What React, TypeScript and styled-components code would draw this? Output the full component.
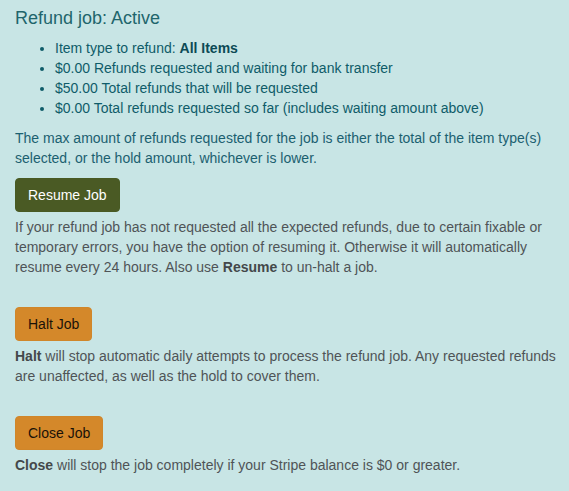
import React from "react";
import styled, { createGlobalStyle } from "styled-components";

const GlobalStyle = createGlobalStyle`
  html, body {
    margin: 0;
    padding: 0;
    background: #c8e5e5;
  }
  body {
    font-family: "Liberation Sans", Arial, sans-serif;
    font-size: 14px;
    line-height: 20px;
  }
`;

const Page = styled.div`
  padding: 8px 5px 0 15px;
  box-sizing: border-box;
  width: 569px;
  min-height: 491px;
  background: #c8e5e5;
`;

const Title = styled.h3`
  margin: 0 0 10px;
  font-size: 18px;
  line-height: 20px;
  font-weight: 400;
  color: #1f656c;
`;

const Summary = styled.ul`
  margin: 0 0 10px;
  padding-left: 40px;
  color: #0f5c69;
`;

const SummaryItem = styled.li`
  line-height: 20px;
  b {
    color: #0c4a55;
  }
`;

const Text = styled.p<{ $tone?: "teal" | "gray" }>`
  margin: 0 0 10px;
  color: ${(p) => (p.$tone === "teal" ? "#1b6070" : "#4f5457")};
  b {
    color: #44484a;
  }
`;

const Section = styled.div<{ $spaced?: boolean }>`
  margin-top: ${(p) => (p.$spaced ? "20px" : "10px")};
  display: flex;
  flex-direction: column;
  align-items: flex-start;
`;

const ActionButton = styled.button<{ $variant: "resume" | "warn" }>`
  font-family: "Liberation Sans", Arial, sans-serif;
  font-size: 14px;
  line-height: 20px;
  padding: 6px 12px;
  border: 1px solid ${(p) => (p.$variant === "resume" ? "#485a23" : "#d0862a")};
  border-radius: 4px;
  background: ${(p) => (p.$variant === "resume" ? "#4a5a24" : "#d4882a")};
  color: ${(p) => (p.$variant === "resume" ? "#ffffff" : "#1a1208")};
  margin: 0 0 5px;
  cursor: pointer;
`;

export default function App() {
  return (
    <>
      <GlobalStyle />
      <Page>
        <Title>Refund job: Active</Title>
        <Summary>
          <SummaryItem>
            Item type to refund: <b>All Items</b>
          </SummaryItem>
          <SummaryItem>$0.00 Refunds requested and waiting for bank transfer</SummaryItem>
          <SummaryItem>$50.00 Total refunds that will be requested</SummaryItem>
          <SummaryItem>$0.00 Total refunds requested so far (includes waiting amount above)</SummaryItem>
        </Summary>
        <Text $tone="teal">
          The max amount of refunds requested for the job is either the total of the item type(s)
          selected, or the hold amount, whichever is lower.
        </Text>
        <Section>
          <ActionButton $variant="resume">Resume Job</ActionButton>
          <Text>
            If your refund job has not requested all the expected refunds, due to certain fixable or
            temporary errors, you have the option of resuming it. Otherwise it will automatically
            resume every 24 hours. Also use <b>Resume</b> to un-halt a job.
          </Text>
        </Section>
        <Section $spaced>
          <ActionButton $variant="warn">Halt Job</ActionButton>
          <Text>
            <b>Halt</b> will stop automatic daily attempts to process the refund job. Any requested
            refunds are unaffected, as well as the hold to cover them.
          </Text>
        </Section>
        <Section $spaced>
          <ActionButton $variant="warn">Close Job</ActionButton>
          <Text>
            <b>Close</b> will stop the job completely if your Stripe balance is $0 or greater.
          </Text>
        </Section>
      </Page>
    </>
  );
}
